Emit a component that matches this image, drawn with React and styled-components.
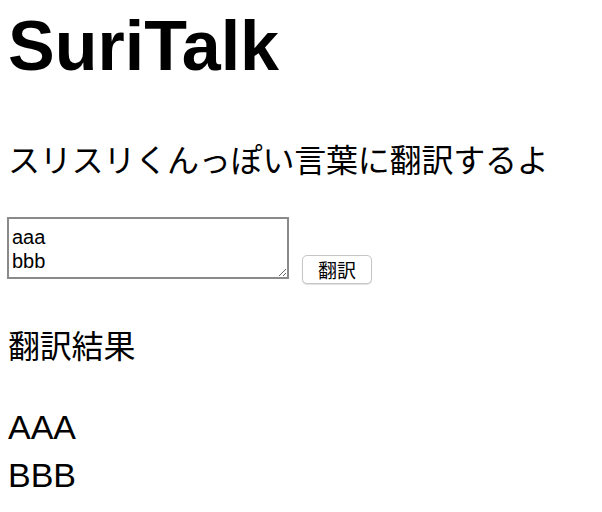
import React, { useState } from "react";
import styled, { createGlobalStyle } from "styled-components";

const Global = createGlobalStyle`
  html, body { margin: 0; padding: 0; background: #fff; }
  body { font-family: "Liberation Sans", "Noto Sans CJK JP", sans-serif; color: #000; }
`;

const Page = styled.div`
  display: flex;
  flex-direction: column;
  align-items: flex-start;
  padding: 6px 8px 0 8px;
`;

const Title = styled.h1`
  margin: 0;
  font-family: "Liberation Sans", sans-serif;
  font-size: 70px;
  font-weight: 700;
  line-height: 80px;
`;

const Lead = styled.p`
  margin: ${(p) => p.$top}px 0 0 0;
  font-family: "Liberation Sans", "Noto Sans CJK JP", sans-serif;
  font-size: 32px;
  line-height: ${(p) => p.$lh}px;
  font-weight: 400;
  letter-spacing: -0.2px;
`;

const FormRow = styled.div`
  display: flex;
  align-items: flex-start;
  gap: 13px;
  margin-top: 36px;
  margin-left: -1px;
`;

const Input = styled.textarea`
  box-sizing: border-box;
  width: 282px;
  height: 62px;
  border: 2px solid #8a8a8a;
  padding: 6px 3px 3px 3px;
  font-family: "Liberation Sans", sans-serif;
  font-size: 20px;
  line-height: 24px;
  color: #000;
  overflow: hidden;
  resize: both;
  outline: none;
  background: #fff;
`;

const Button = styled.button`
  box-sizing: border-box;
  margin-top: 38px;
  width: 70px;
  height: 29px;
  padding: 0;
  border: 1px solid #c6c6c6;
  border-radius: 5px;
  background: #fff;
  box-shadow: 0 1px 1px rgba(0, 0, 0, 0.12);
  font-family: "Noto Sans CJK JP", sans-serif;
  font-size: 19px;
  line-height: 27px;
  color: #000;
`;

const Result = styled.div`
  margin-top: 32px;
  font-family: "Liberation Sans", sans-serif;
  font-size: 34px;
  line-height: 48px;
`;

const ResultLine = styled.div``;

export default function App() {
  const [text, setText] = useState("aaa\nbbb");
  const [result, setResult] = useState("aaa\nbbb".toUpperCase());
  return (
    <>
      <Global />
      <Page>
        <Title>SuriTalk</Title>
        <Lead $top={55} $lh={40}>スリスリくんっぽい言葉に翻訳するよ</Lead>
        <FormRow>
          <Input value={text} onChange={(e) => setText(e.target.value)} />
          <Button onClick={() => setResult(text.toUpperCase())}>翻訳</Button>
        </FormRow>
        <Lead $top={39} $lh={48}>翻訳結果</Lead>
        <Result>
          {result.split("\n").map((l, i) => (
            <ResultLine key={i}>{l}</ResultLine>
          ))}
        </Result>
      </Page>
    </>
  );
}
